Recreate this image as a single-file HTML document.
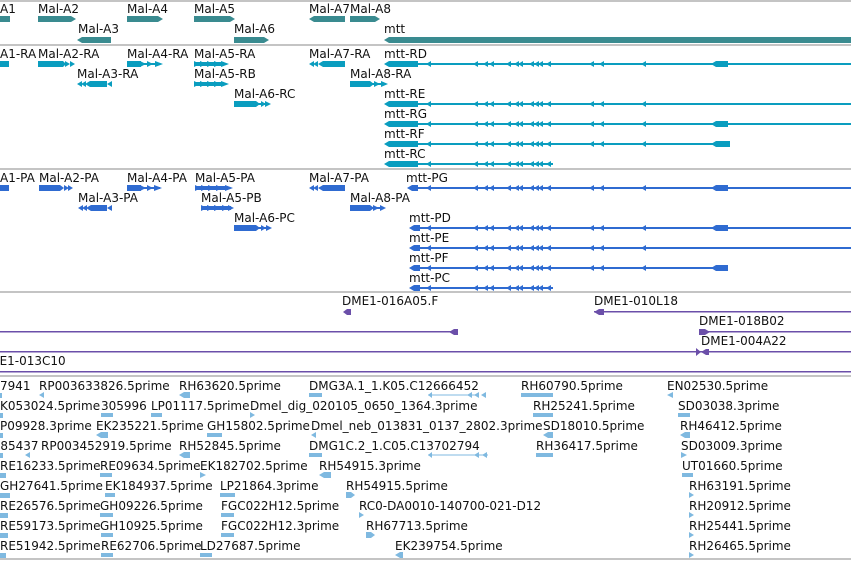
<!DOCTYPE html>
<html><head><meta charset="utf-8"><style>
html,body{margin:0;padding:0;background:#fff;width:851px;height:561px;overflow:hidden}
svg{display:block}
text{font-family:"DejaVu Sans","Liberation Sans",sans-serif;font-size:12px;fill:#111}
</style></head><body>
<svg width="851" height="561" viewBox="0 0 851 561" xmlns="http://www.w3.org/2000/svg">
<defs>
<polygon id="la" points="0,0 5,-3 5,3"/>
<g id="mAs">
<use href="#la" x="426"/><use href="#la" x="473"/><use href="#la" x="483"/><use href="#la" x="489"/><use href="#la" x="506"/><use href="#la" x="514"/><use href="#la" x="518"/><use href="#la" x="529"/><use href="#la" x="534"/><use href="#la" x="538"/><use href="#la" x="546"/>
</g>
<g id="mA">
<use href="#mAs"/><use href="#la" x="589"/><use href="#la" x="599"/><use href="#la" x="641"/>
</g>
</defs>
<g fill="#c4c4c4">
<rect x="0" y="0" width="851" height="2"/>
<rect x="0" y="44" width="851" height="2"/>
<rect x="0" y="168" width="851" height="2"/>
<rect x="0" y="291" width="851" height="2"/>
<rect x="0" y="375" width="851" height="2"/>
<rect x="0" y="558" width="851" height="2"/>
</g>

<g>
<text x="0" y="13">A1</text><text x="38" y="13">Mal-A2</text><text x="127" y="13">Mal-A4</text><text x="194" y="13">Mal-A5</text><text x="309" y="13">Mal-A7</text><text x="350" y="13">Mal-A8</text>
<text x="78" y="33">Mal-A3</text><text x="234" y="33">Mal-A6</text><text x="384" y="33">mtt</text>
</g>
<g fill="#3a8b90">
<rect x="0" y="16" width="10" height="6"/>
<polygon points="38,16 71,16 76,19 71,22 38,22"/>
<polygon points="127,16 158,16 163,19 158,22 127,22"/>
<polygon points="194,16 230,16 235,19 230,22 194,22"/>
<polygon points="309,19 314,16 345,16 345,22 314,22"/>
<polygon points="350,16 375,16 380,19 375,22 350,22"/>
<polygon points="77,40 82,37 111,37 111,43 82,43"/>
<polygon points="234,37 264,37 269,40 264,43 234,43"/>
<polygon points="384,40 389,37 851,37 851,43 389,43"/>
</g>

<g>
<text x="0" y="58">A1-RA</text><text x="38" y="58">Mal-A2-RA</text><text x="127" y="58">Mal-A4-RA</text><text x="194" y="58">Mal-A5-RA</text><text x="309" y="58">Mal-A7-RA</text><text x="384" y="58">mtt-RD</text>
<text x="77" y="78">Mal-A3-RA</text><text x="194" y="78">Mal-A5-RB</text><text x="350" y="78">Mal-A8-RA</text>
<text x="234" y="98">Mal-A6-RC</text><text x="384" y="98">mtt-RE</text>
<text x="384" y="118">mtt-RG</text><text x="384" y="138">mtt-RF</text><text x="384" y="158">mtt-RC</text>
</g>
<g fill="#0a9dbf">
<rect x="0" y="61" width="9" height="6"/>
<polygon points="38,61 63,61 66,64 63,67 38,67"/><polygon points="65,61 70,64 65,67"/><polygon points="70,61 75,64 70,67"/>
<rect x="127" y="61" width="14" height="6"/><polygon points="140,61 146,64 140,67"/><polygon points="147,61 153,64 147,67"/><polygon points="155,61 163,64 155,67"/><rect x="140" y="63" width="20" height="2"/>
<polygon points="194,61 200,64 194,67"/><polygon points="200,61 207,64 200,67"/><polygon points="207,61 214,64 207,67"/><polygon points="214,61 221,64 214,67"/><polygon points="221,61 229,64 221,67"/><rect x="194" y="62" width="30" height="4"/>
<polygon points="309,64 314,61 314,67"/><polygon points="313,64 318,61 318,67"/><polygon points="318,64 323,61 345,61 345,67 323,67"/>
<polygon points="384,64 389,61 418,61 418,67 389,67"/>
<polygon points="77,84 82,81 82,87"/><polygon points="81,84 86,81 86,87"/><polygon points="85,84 90,81 107,81 107,87 90,87"/><polygon points="107,84 112,81 112,87"/>
<polygon points="194,81 200,84 194,87"/><polygon points="200,81 207,84 200,87"/><polygon points="207,81 214,84 207,87"/><polygon points="214,81 221,84 214,87"/><polygon points="221,81 229,84 221,87"/><rect x="194" y="82" width="30" height="4"/>
<polygon points="350,81 370,81 374,84 370,87 350,87"/><polygon points="374,81 380,84 374,87"/><polygon points="381,81 388,84 381,87"/><rect x="370" y="83" width="15" height="2"/>
<polygon points="234,101 256,101 260,104 256,107 234,107"/><polygon points="261,101 266,104 261,107"/><polygon points="265,101 271,104 265,107"/><rect x="256" y="103" width="10" height="2"/>
<polygon points="384,104 389,101 418,101 418,107 389,107"/>
<polygon points="384,124 389,121 418,121 418,127 389,127"/>
<polygon points="384,144 389,141 418,141 418,147 389,147"/>
<polygon points="384,164 389,161 418,161 418,167 389,167"/>
<rect x="418" y="63" width="433" height="2"/>
<rect x="418" y="103" width="433" height="2"/>
<rect x="418" y="123" width="433" height="2"/>
<rect x="418" y="143" width="312" height="2"/>
<rect x="418" y="163" width="135" height="2"/>
<polygon points="711,64 716,61 728,61 728,67 716,67"/>
<polygon points="711,124 716,121 728,121 728,127 716,127"/>
<polygon points="711,144 716,141 730,141 730,147 716,147"/>
<use href="#mA" y="64"/><use href="#mA" y="104"/><use href="#mA" y="124"/><use href="#mA" y="144"/><use href="#mAs" y="164"/>
</g>

<g>
<text x="0" y="182">A1-PA</text><text x="39" y="182">Mal-A2-PA</text><text x="127" y="182">Mal-A4-PA</text><text x="195" y="182">Mal-A5-PA</text><text x="309" y="182">Mal-A7-PA</text><text x="406" y="182">mtt-PG</text>
<text x="78" y="202">Mal-A3-PA</text><text x="201" y="202">Mal-A5-PB</text><text x="350" y="202">Mal-A8-PA</text>
<text x="234" y="222">Mal-A6-PC</text><text x="409" y="222">mtt-PD</text>
<text x="409" y="242">mtt-PE</text><text x="409" y="262">mtt-PF</text><text x="409" y="282">mtt-PC</text>
</g>
<g fill="#2f6bd1">
<rect x="0" y="185" width="9" height="6"/>
<polygon points="39,185 60,185 64,188 60,191 39,191"/><polygon points="64,185 69,188 64,191"/><polygon points="68,185 73,188 68,191"/>
<rect x="127" y="185" width="14" height="6"/><polygon points="140,185 146,188 140,191"/><polygon points="147,185 153,188 147,191"/><polygon points="154,185 162,188 154,191"/><rect x="140" y="187" width="20" height="2"/>
<polygon points="195,185 201,188 195,191"/><polygon points="201,185 208,188 201,191"/><polygon points="208,185 215,188 208,191"/><polygon points="216,185 223,188 216,191"/><polygon points="225,185 233,188 225,191"/><rect x="195" y="186" width="33" height="4"/>
<polygon points="309,188 314,185 314,191"/><polygon points="313,188 318,185 318,191"/><polygon points="318,188 323,185 345,185 345,191 323,191"/>
<polygon points="78,208 83,205 83,211"/><polygon points="82,208 87,205 87,211"/><polygon points="86,208 91,205 107,205 107,211 91,211"/><polygon points="107,208 112,205 112,211"/>
<polygon points="201,205 207,208 201,211"/><polygon points="207,205 214,208 207,211"/><polygon points="214,205 221,208 214,211"/><polygon points="222,205 229,208 222,211"/><polygon points="228,205 234,208 228,211"/><rect x="201" y="206" width="30" height="4"/>
<polygon points="350,205 370,205 374,208 370,211 350,211"/><polygon points="373,205 379,208 373,211"/><polygon points="380,205 386,208 380,211"/><rect x="370" y="207" width="14" height="2"/>
<polygon points="234,225 256,225 260,228 256,231 234,231"/><polygon points="261,225 266,228 261,231"/><polygon points="266,225 272,228 266,231"/><rect x="256" y="227" width="10" height="2"/>
<polygon points="407,188 412,185 418,185 418,191 412,191"/>
<polygon points="409,228 414,225 420,225 420,231 414,231"/>
<polygon points="409,248 414,245 420,245 420,251 414,251"/>
<polygon points="409,268 414,265 420,265 420,271 414,271"/>
<polygon points="409,288 414,285 420,285 420,291 414,291"/>
<rect x="418" y="187" width="433" height="2"/>
<rect x="418" y="227" width="433" height="2"/>
<rect x="418" y="247" width="433" height="2"/>
<rect x="418" y="267" width="310" height="2"/>
<rect x="418" y="287" width="135" height="2"/>
<polygon points="711,188 716,185 728,185 728,191 716,191"/>
<polygon points="711,228 716,225 728,225 728,231 716,231"/>
<polygon points="711,268 716,265 728,265 728,271 716,271"/>
<use href="#mA" y="188"/><use href="#mA" y="228"/><use href="#mA" y="248"/><use href="#mA" y="268"/><use href="#mAs" y="288"/>
</g>

<g>
<text x="342" y="305">DME1-016A05.F</text><text x="594" y="305">DME1-010L18</text>
<text x="699" y="325">DME1-018B02</text><text x="701" y="345">DME1-004A22</text>
<text x="-20" y="365">DME1-013C10</text>
</g>
<g fill="#6b4fa9">
<polygon points="343,312 347,309 351,309 351,315 347,315"/>
<rect x="594" y="311" width="257" height="1.5"/><polygon points="594,312 599,309 604,309 604,315 599,315"/>
<rect x="0" y="331" width="455" height="1.5"/><polygon points="449,332 454,329 458,329 458,335 454,335"/>
<rect x="699" y="331" width="152" height="1.5"/><polygon points="699,329 705,329 710,332 705,335 699,335"/>
<rect x="0" y="351" width="851" height="1.5"/><polygon points="696,348 701,352 696,356"/><polygon points="701,352 706,349 709,349 709,355 706,355"/>
<rect x="0" y="371" width="851" height="1.5"/>
</g>

<g>
<text x="0" y="390">7941</text><text x="39" y="390">RP003633826.5prime</text><text x="179" y="390">RH63620.5prime</text><text x="309" y="390">DMG3A.1_1.K05.C12666452</text><text x="521" y="390">RH60790.5prime</text><text x="667" y="390">EN02530.5prime</text>
<text x="0" y="410">K053024.5prime</text><text x="101" y="410">305996</text><text x="151" y="410">LP01117.5prime</text><text x="250" y="410">Dmel_dig_020105_0650_1364.3prime</text><text x="533" y="410">RH25241.5prime</text><text x="678" y="410">SD03038.3prime</text>
<text x="0" y="430">P09928.3prime</text><text x="96" y="430">EK235221.5prime</text><text x="207" y="430">GH15802.5prime</text><text x="311" y="430">Dmel_neb_013831_0137_2802.3prime</text><text x="543" y="430">SD18010.5prime</text><text x="680" y="430">RH46412.5prime</text>
<text x="-4" y="450">-85437</text><text x="41" y="450">RP003452919.5prime</text><text x="179" y="450">RH52845.5prime</text><text x="309" y="450">DMG1C.2_1.C05.C13702794</text><text x="536" y="450">RH36417.5prime</text><text x="681" y="450">SD03009.3prime</text>
<text x="0" y="470">RE16233.5prime</text><text x="100" y="470">RE09634.5prime</text><text x="200" y="470">EK182702.5prime</text><text x="319" y="470">RH54915.3prime</text><text x="682" y="470">UT01660.5prime</text>
<text x="0" y="490">GH27641.5prime</text><text x="105" y="490">EK184937.5prime</text><text x="220" y="490">LP21864.3prime</text><text x="346" y="490">RH54915.5prime</text><text x="689" y="490">RH63191.5prime</text>
<text x="0" y="510">RE26576.5prime</text><text x="100" y="510">GH09226.5prime</text><text x="221" y="510">FGC022H12.5prime</text><text x="359" y="510">RC0-DA0010-140700-021-D12</text><text x="689" y="510">RH20912.5prime</text>
<text x="0" y="530">RE59173.5prime</text><text x="100" y="530">GH10925.5prime</text><text x="221" y="530">FGC022H12.3prime</text><text x="366" y="530">RH67713.5prime</text><text x="689" y="530">RH25441.5prime</text>
<text x="0" y="550">RE51942.5prime</text><text x="101" y="550">RE62706.5prime</text><text x="200" y="550">LD27687.5prime</text><text x="395" y="550">EK239754.5prime</text><text x="689" y="550">RH26465.5prime</text>
</g>
<g fill="#7fb9e0">
<rect x="0" y="393" width="2" height="5"/><polygon points="39,395 44,392 44,398"/><polygon points="179,395 184,392 190,392 190,398 184,398"/><rect x="309" y="393" width="13" height="4"/><rect x="428" y="394.5" width="50" height="1"/><polygon points="428,395 432,392 432,398"/><polygon points="467,395 472,392 472,398"/><polygon points="474,395 479,392 479,398"/><polygon points="481,395 486,392 486,398"/><rect x="521" y="393" width="32" height="4"/><polygon points="667,395 673,392 673,398"/>
<rect x="0" y="413" width="3" height="5"/><rect x="101" y="413" width="12" height="4"/><rect x="151" y="413" width="11" height="4"/><polygon points="250,412 255,415 250,418"/><rect x="533" y="413" width="20" height="4"/><rect x="678" y="413" width="12" height="4"/>
<rect x="0" y="433" width="3" height="5"/><polygon points="96,435 101,432 108,432 108,438 101,438"/><rect x="207" y="433" width="15" height="4"/><polygon points="311,435 316,432 316,438"/><polygon points="543,435 548,432 553,432 553,438 548,438"/><polygon points="680,435 685,432 690,432 690,438 685,438"/>
<rect x="0" y="453" width="3" height="5"/><polygon points="25,455 30,452 30,458"/><polygon points="179,455 184,452 190,452 190,458 184,458"/><rect x="309" y="453" width="13" height="4"/><rect x="428" y="454.5" width="60" height="1"/><polygon points="428,455 432,452 432,458"/><polygon points="474,455 479,452 479,458"/><polygon points="482,455 487,452 487,458"/><rect x="536" y="453" width="17" height="4"/><polygon points="681,452 687,455 681,458"/>
<rect x="0" y="473" width="6" height="5"/><rect x="100" y="473" width="12" height="4"/><polygon points="200,472 206,475 200,478"/><polygon points="319,475 324,472 331,472 331,478 324,478"/><rect x="682" y="473" width="11" height="4"/>
<rect x="0" y="493" width="10" height="5"/><rect x="105" y="493" width="10" height="4"/><rect x="220" y="493" width="15" height="4"/><polygon points="346,492 351,492 355,495 351,498 346,498"/><polygon points="689,492 694,495 689,498"/>
<rect x="0" y="513" width="8" height="5"/><rect x="100" y="513" width="13" height="4"/><rect x="221" y="513" width="13" height="4"/><polygon points="359,512 364,515 359,518"/><polygon points="689,512 694,515 689,518"/>
<rect x="0" y="533" width="8" height="5"/><rect x="101" y="533" width="12" height="4"/><rect x="221" y="533" width="13" height="4"/><polygon points="366,532 371,532 375,535 371,538 366,538"/><polygon points="689,532 694,535 689,538"/>
<rect x="0" y="553" width="6" height="5"/><rect x="101" y="553" width="12" height="4"/><rect x="200" y="553" width="12" height="4"/><polygon points="395,555 400,552 403,552 403,558 400,558"/><polygon points="689,552 694,555 689,558"/>
</g>
</svg>
</body></html>
